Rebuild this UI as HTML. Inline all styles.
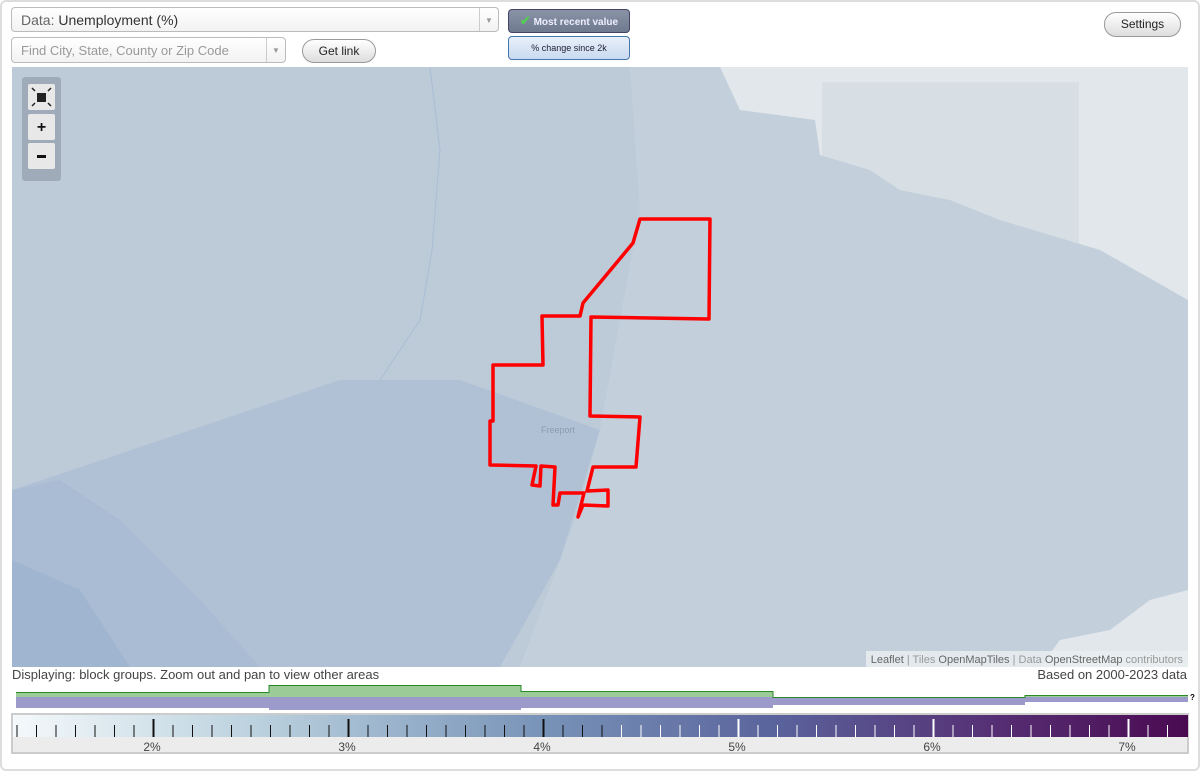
<!DOCTYPE html>
<html><head><meta charset="utf-8"><style>
body{margin:0;width:1200px;height:771px;background:#fff;font-family:"Liberation Sans",sans-serif;position:relative;overflow:hidden}
.frame{position:absolute;left:0;top:0;width:1196px;height:767px;border:2px solid #ddd;border-radius:6px}
.sel{position:absolute;background:linear-gradient(#fff,#f2f2f2);border:1px solid #bbb;border-radius:4px;color:#555}
.btn{position:absolute;border:1px solid #999;border-radius:12px;background:linear-gradient(#fff,#ddd);font-size:12px;text-align:center;color:#222}
.arrow{position:absolute;right:0;top:0;bottom:0;width:18px;border-left:1px solid #ccc;color:#999;font-size:8px;text-align:center}
</style></head><body>
<div class="frame"></div>
<div class="sel" style="left:11px;top:7px;width:488px;height:25px;font-size:14px;line-height:25px;padding-left:9px;box-sizing:border-box"><span style="color:#666">Data:</span> <span style="color:#333">Unemployment (%)</span><div class="arrow" style="line-height:25px">▼</div></div>
<div class="sel" style="left:11px;top:37px;width:275px;height:26px;font-size:13px;line-height:26px;padding-left:9px;box-sizing:border-box;color:#999">Find City, State, County or Zip Code<div class="arrow" style="line-height:26px">▼</div></div>
<div class="btn" style="left:302px;top:39px;width:72px;height:22px;line-height:22px">Get link</div>
<div style="position:absolute;left:508px;top:9px;width:120px;height:22px;border:1px solid #446;border-radius:4px;background:linear-gradient(#8a93a6,#6f7a90);color:#eef;font-size:10px;font-weight:bold;line-height:22px;text-align:center"><span style="color:#5c5;font-size:13px">✔</span> Most recent value</div>
<div style="position:absolute;left:508px;top:36px;width:120px;height:22px;border:1px solid #47a;border-radius:4px;background:linear-gradient(#e8f0fa,#c9daf0);color:#223;font-size:9px;line-height:22px;text-align:center">% change since 2k</div>
<div class="btn" style="left:1104px;top:12px;width:75px;height:23px;line-height:23px">Settings</div>

<svg style="position:absolute;left:12px;top:67px" width="1176" height="600" viewBox="12 67 1176 600">
<rect x="12" y="67" width="1176" height="600" fill="#bdcbd9"/>
<path d="M630 67 L1188 67 L1188 667 L520 667 L575 520 L600 430 L640 210 Z" fill="#c3d0dc"/>
<path d="M720 67 L1188 67 L1188 300 L1100 250 L1000 220 L950 200 L900 190 L870 170 L820 155 L815 120 L740 110 Z" fill="#e2e7eb"/>
<rect x="822" y="82" width="257" height="512" fill="#c4d0db" opacity=".35"/>
<path d="M1040 667 L1060 640 L1110 630 L1150 600 L1188 590 L1188 667 Z" fill="#e2e7eb"/>
<path d="M12 490 L340 380 L460 380 L600 430 L560 560 L500 667 L12 667 Z" fill="#b1c1d5"/>
<path d="M12 490 L60 480 L120 520 L200 600 L260 667 L12 667 Z" fill="#a9bcd3"/>
<path d="M12 560 L80 590 L130 667 L12 667 Z" fill="#9fb5d0"/>
<path d="M430 67 L440 150 L432 250 L420 320 L380 380" stroke="#aabdd4" stroke-width="1" fill="none"/>
<path d="M640 219 L710 219 L709 319 L591 317 L590 416 L640 417 L636 467 L593 467 L587 491 L608 490 L608 506 L583 505 L578 517 L584 493 L560 493 L558 505 L553 505 L555 467 L541 466 L540 486 L532 485 L536 466 L490 465 L490 421 L493 421 L493 365 L543 365 L542 316 L580 316 L583 303 L633 243 Z" fill="none" stroke="#ff0000" stroke-width="3.5" stroke-linejoin="round"/>
<text x="541" y="433" font-size="9" fill="#8a9bb0" font-family="Liberation Sans">Freeport</text>
<rect x="22" y="77" width="39" height="104" rx="3" fill="#8a96a4" opacity=".6"/>
<rect x="28" y="84" width="27" height="26" rx="2" fill="#e8e8e8"/><rect x="37" y="93" width="9" height="9" fill="#222"/>
<path d="M32 88 l3 3 M51 88 l-3 3 M32 106 l3 -3 M51 106 l-3 -3" stroke="#222" stroke-width="1.5"/>
<rect x="28" y="114" width="27" height="26" rx="2" fill="#e8e8e8"/><text x="41.5" y="132" text-anchor="middle" font-size="16" font-weight="bold" fill="#111">+</text>
<rect x="28" y="143" width="27" height="26" rx="2" fill="#e8e8e8"/><rect x="37" y="155" width="9" height="3" fill="#111"/>
<rect x="866" y="651" width="322" height="16" fill="#e9edf0" opacity=".85"/>
<text x="1183" y="663" text-anchor="end" font-size="11" fill="#999" font-family="Liberation Sans"><tspan fill="#666">Leaflet</tspan> | Tiles <tspan fill="#666">OpenMapTiles</tspan> | Data <tspan fill="#666">OpenStreetMap</tspan> contributors</text>
</svg>
<div style="position:absolute;left:12px;top:667px;font-size:13px;color:#444">Displaying: block groups. Zoom out and pan to view other areas</div>
<div style="position:absolute;right:13px;top:667px;font-size:13px;color:#444">Based on 2000-2023 data</div>
<svg style="position:absolute;left:0;top:0" width="1200" height="712">
<g fill="#9c99cb">
<rect x="16" y="697" width="253" height="11"/><rect x="269" y="697" width="252" height="13"/><rect x="521" y="697" width="252" height="11"/><rect x="773" y="697" width="252" height="8"/><rect x="1025" y="697" width="163" height="5"/></g>
<g fill="#9bcb96">
<rect x="16" y="692" width="253" height="5"/><rect x="269" y="685" width="252" height="12"/><rect x="521" y="691" width="252" height="6"/><rect x="773" y="697" width="252" height="1"/><rect x="1025" y="695" width="163" height="2"/></g>
<path d="M16 692.5 L269 692.5 L269 685.5 L521 685.5 L521 691.5 L773 691.5 L773 697.5 L1025 697.5 L1025 695.5 L1188 695.5" fill="none" stroke="#2a8a2a" stroke-width="1"/>
<text x="1190" y="700" font-size="8" font-weight="bold">?</text>
</svg>
<div style="position:absolute;left:11px;top:713px;width:1178px;height:41px;border:2px solid #ccc;background:#ececec;box-sizing:border-box"></div>
<svg style="position:absolute;left:13px;top:715px" width="1175" height="38">
<defs><linearGradient id="g"><stop offset="0" stop-color="#f4f9fb"/><stop offset=".2" stop-color="#bdd3df"/><stop offset=".45" stop-color="#7893b8"/><stop offset=".65" stop-color="#5a639c"/><stop offset=".85" stop-color="#552b70"/><stop offset="1" stop-color="#4a0a52"/></linearGradient></defs>
<rect x="0" y="0" width="1175" height="22" fill="url(#g)"/>
<g id="t"></g>
<g font-size="12" fill="#444" text-anchor="middle" font-family="Liberation Sans">
<text x="139" y="36">2%</text><text x="334" y="36">3%</text><text x="529" y="36">4%</text><text x="724" y="36">5%</text><text x="919" y="36">6%</text><text x="1114" y="36">7%</text></g>
</svg>
<script>
var g=document.getElementById('t'),s='';
for(var i=0;i<60;i++){var x=4+i*19.5;if(x>1172)break;var maj=(i%10==7);var c=x<590?'#111':'#fff';s+='<rect x="'+(x-(maj?1:0.5))+'" y="'+(maj?4:10)+'" width="'+(maj?2:1)+'" height="'+(maj?18:12)+'" fill="'+c+'"/>';}
g.innerHTML=s;
</script>
</body></html>
